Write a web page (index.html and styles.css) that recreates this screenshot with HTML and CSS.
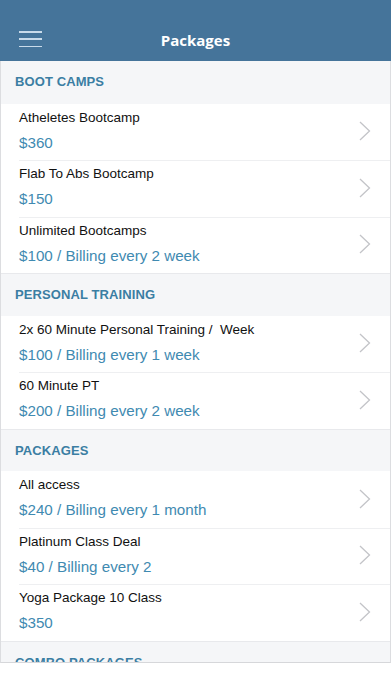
FILE: index.html
```html
<!DOCTYPE html>
<html lang="en">
  <head>
    <meta charset="UTF-8" />
    <meta name="viewport" content="width=device-width, initial-scale=1.0" />
    <title>Packages</title>
    <link rel="stylesheet" href="styles.css">
  </head>
  <body>
    <div class="screen">
      <header class="topbar">
        <button class="menu-btn" aria-label="Menu">
          <span></span><span></span><span></span>
        </button>
        <h1>Packages</h1>
      </header>

      <div class="list">
        <div class="section-head">BOOT CAMPS</div>
        <div class="row">
          <div class="info">
            <div class="name">Atheletes Bootcamp</div>
            <div class="price">$360</div>
          </div>
          <svg class="chev" viewBox="0 0 12 20"><path d="M1 1 L10.5 10 L1 19" /></svg>
        </div>
        <div class="row">
          <div class="info">
            <div class="name">Flab To Abs Bootcamp</div>
            <div class="price">$150</div>
          </div>
          <svg class="chev" viewBox="0 0 12 20"><path d="M1 1 L10.5 10 L1 19" /></svg>
        </div>
        <div class="row">
          <div class="info">
            <div class="name">Unlimited Bootcamps</div>
            <div class="price">$100 / Billing every 2 week</div>
          </div>
          <svg class="chev" viewBox="0 0 12 20"><path d="M1 1 L10.5 10 L1 19" /></svg>
        </div>

        <div class="section-head">PERSONAL TRAINING</div>
        <div class="row">
          <div class="info">
            <div class="name">2x 60 Minute Personal Training /&nbsp; Week</div>
            <div class="price">$100 / Billing every 1 week</div>
          </div>
          <svg class="chev" viewBox="0 0 12 20"><path d="M1 1 L10.5 10 L1 19" /></svg>
        </div>
        <div class="row">
          <div class="info">
            <div class="name">60 Minute PT</div>
            <div class="price">$200 / Billing every 2 week</div>
          </div>
          <svg class="chev" viewBox="0 0 12 20"><path d="M1 1 L10.5 10 L1 19" /></svg>
        </div>

        <div class="section-head">PACKAGES</div>
        <div class="row">
          <div class="info">
            <div class="name">All access</div>
            <div class="price">$240 / Billing every 1 month</div>
          </div>
          <svg class="chev" viewBox="0 0 12 20"><path d="M1 1 L10.5 10 L1 19" /></svg>
        </div>
        <div class="row">
          <div class="info">
            <div class="name">Platinum Class Deal</div>
            <div class="price">$40 / Billing every 2</div>
          </div>
          <svg class="chev" viewBox="0 0 12 20"><path d="M1 1 L10.5 10 L1 19" /></svg>
        </div>
        <div class="row">
          <div class="info">
            <div class="name">Yoga Package 10 Class</div>
            <div class="price">$350</div>
          </div>
          <svg class="chev" viewBox="0 0 12 20"><path d="M1 1 L10.5 10 L1 19" /></svg>
        </div>

        <div class="section-head">COMBO PACKAGES</div>
      </div>
    </div>
  </body>
</html>
```

FILE: styles.css
```css
* {
  box-sizing: border-box;
}

body {
  margin: 0;
  background: #fff;
  font-family: 'Liberation Sans', Arial, sans-serif;
  color: #111;
}

.screen {
  width: 391px;
}

.topbar {
  height: 61px;
  background: #45749a;
  display: flex;
  align-items: center;
  justify-content: center;
  position: relative;
}

.topbar h1 {
  margin: 0;
  font-family: 'Open Sans', sans-serif;
  font-size: 15px;
  font-weight: 700;
  color: #fff;
  padding-top: 18px;
}

.menu-btn {
  position: absolute;
  left: 19px;
  top: 31px;
  width: 23px;
  height: 16px;
  padding: 0;
  border: none;
  background: none;
  display: flex;
  flex-direction: column;
  justify-content: space-between;
}

.menu-btn span {
  display: block;
  height: 1.5px;
  background: #c9dbea;
}

.list {
  height: 602px;
  overflow: hidden;
  border-left: 1px solid #dcdde0;
  border-right: 1px solid #dcdde0;
  border-bottom: 1px solid #d6d7da;
}

.section-head {
  height: 42.5px;
  background: #f5f6f8;
  border-top: 1px solid #e8e9ec;
  padding: 13px 0 0 14px;
  font-size: 13px;
  font-weight: 700;
  color: #3b7ea3;
  letter-spacing: 0.1px;
}

.section-head:first-child {
  border-top: none;
}

.row {
  height: 56.5px;
  display: flex;
  align-items: center;
  padding: 0 19px 0 18px;
  position: relative;
}

.row + .row::before {
  content: '';
  position: absolute;
  top: 0;
  left: 18px;
  right: 0;
  border-top: 1px solid #eeeff1;
}

.info {
  flex: 1;
  align-self: flex-start;
  padding-top: 5px;
}

.name {
  font-size: 13.5px;
  line-height: 18px;
  color: #111;
}

.price {
  margin-top: 5px;
  font-size: 15.2px;
  line-height: 22px;
  color: #3f8ab1;
}

.chev {
  width: 12px;
  height: 20px;
  margin-top: -1px;
  fill: none;
  stroke: #c3c4c8;
  stroke-width: 1.3;
}
```
